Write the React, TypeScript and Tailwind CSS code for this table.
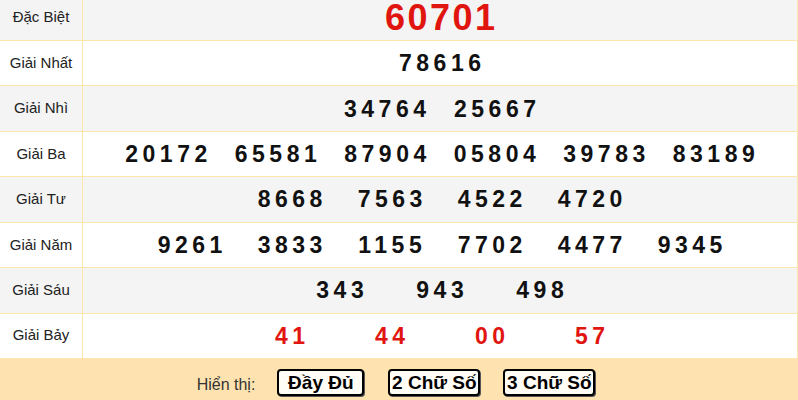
import React from "react";

type Row = { label: string; nums: string[]; cell: string; red?: boolean; special?: boolean; bg: string };

const rows: Row[] = [
  { label: "Đặc Biệt", nums: ["60701"], cell: "", special: true, red: true, bg: "bg-[#f4f4f4]" },
  { label: "Giải Nhất", nums: ["78616"], cell: "w-[110px]", bg: "bg-white" },
  { label: "Giải Nhì", nums: ["34764", "25667"], cell: "w-[110px]", bg: "bg-[#f4f4f4]" },
  { label: "Giải Ba", nums: ["20172", "65581", "87904", "05804", "39783", "83189"], cell: "w-[109.5px]", bg: "bg-white" },
  { label: "Giải Tư", nums: ["8668", "7563", "4522", "4720"], cell: "w-[100px]", bg: "bg-[#f4f4f4]" },
  { label: "Giải Năm", nums: ["9261", "3833", "1155", "7702", "4477", "9345"], cell: "w-[100px]", bg: "bg-white" },
  { label: "Giải Sáu", nums: ["343", "943", "498"], cell: "w-[100px]", bg: "bg-[#f4f4f4]" },
  { label: "Giải Bảy", nums: ["41", "44", "00", "57"], cell: "w-[100px]", red: true, bg: "bg-white" },
];

const btn =
  "h-[27px] border-2 border-black rounded-[4px] bg-[#fffdf6] text-[19px] font-bold text-black leading-none whitespace-nowrap flex items-center justify-center shadow-[1px_1px_0_#555] p-0";

export default function App() {
  return (
    <div className="w-[798px] h-[400px] overflow-hidden bg-white font-['Liberation_Sans',Arial,sans-serif]">
      <div className="w-[798px] border-r border-[#fde6ad]">
        {rows.map((r, i) => (
          <div
            key={i}
            className={`flex border-b border-[#fde6ad] ${r.bg} ${i === 0 ? "h-[41px]" : "h-[45.43px]"}`}
          >
            <div
              className={`w-[83px] shrink-0 border-r border-[#fde6ad] flex items-center justify-center text-[15px] text-[#222] ${i === 0 ? "pb-[5px]" : ""}`}
            >
              {r.label}
            </div>
            <div className={`flex-1 flex items-center justify-center ${i === 0 ? "pb-[4px]" : ""}`}>
              {r.nums.map((n, j) => (
                <div
                  key={j}
                  className={`${r.cell} flex justify-center font-bold whitespace-nowrap ${
                    r.special
                      ? "text-[36px] tracking-[2.5px] pl-[2.5px] leading-[34px]"
                      : "text-[23px] tracking-[4.5px] pl-[4.5px] leading-[26px]"
                  } ${r.red ? "text-[#e1150f]" : "text-[#111]"}`}
                >
                  {n}
                </div>
              ))}
            </div>
          </div>
        ))}
      </div>
      <div className="h-[42px] bg-[#fee3b0] flex items-start justify-center pt-[10px] pr-[6px]">
        <span className="text-[16px] text-[#333] mt-[4px] mr-[22px] whitespace-nowrap">Hiển thị:</span>
        <button className={`${btn} w-[87px] mr-[24px]`}>Đầy Đủ</button>
        <button className={`${btn} w-[92px] mr-[23px]`}>2 Chữ Số</button>
        <button className={`${btn} w-[92px]`}>3 Chữ Số</button>
      </div>
    </div>
  );
}
